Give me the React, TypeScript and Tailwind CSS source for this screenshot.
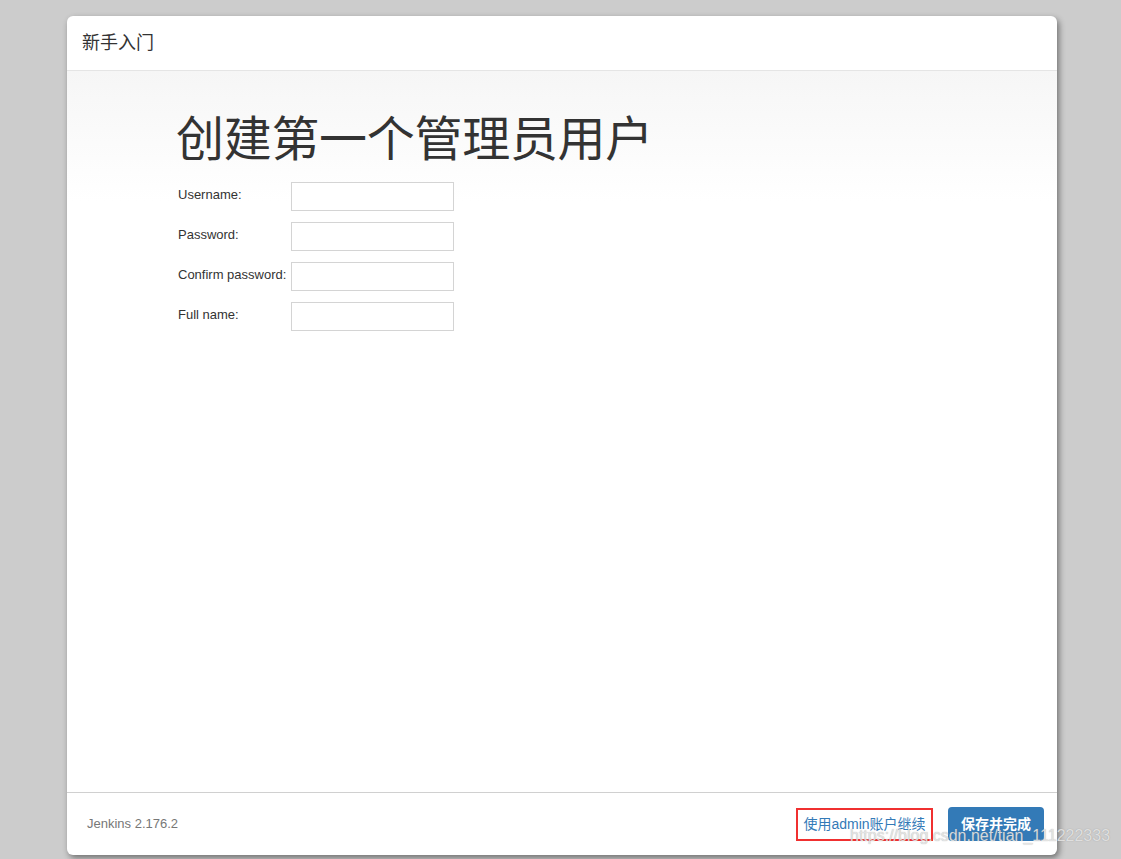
import React from "react";

const sans = "font-['Liberation_Sans','Noto_Sans_CJK_SC',sans-serif]";

export default function App() {
  const fields = ["Username:", "Password:", "Confirm password:", "Full name:"];
  return (
    <div className={`relative h-[859px] w-[1121px] overflow-hidden bg-[#cccccc] pl-[67px] pt-[16px] ${sans}`}>
      <div className="relative flex h-[839px] w-[990px] flex-col rounded-[6px] bg-white shadow-[2px_3px_6px_rgba(0,0,0,0.45)]">
        <div className="flex h-[55px] items-center border-b border-[#e5e5e5] px-[15px]">
          <span className="text-[18px] text-[#333333]">新手入门</span>
        </div>
        <div className="flex-1 bg-[linear-gradient(to_bottom,#f6f6f6_0px,#ffffff_130px)] pl-[109px] pt-[42px]">
          <h1 className="text-[48px] leading-[54px] font-normal text-[#333333] tracking-[-0.3px]">创建第一个管理员用户</h1>
          <div className="mt-[15px] grid grid-cols-[113px_163px] gap-y-[11px] pl-[2px]">
            {fields.map((f) => (
              <React.Fragment key={f}>
                <div className="pt-[5px] text-[13px] leading-[15px] text-[#333333]">{f}</div>
                <input className="h-[29px] w-[163px] border border-[#d4d4d4] bg-white outline-none" />
              </React.Fragment>
            ))}
          </div>
        </div>
        <div className="flex h-[63px] items-center border-t border-[#d0d0d0] pl-[20px] pr-[13px]">
          <span className="text-[13px] text-[#777777]">Jenkins 2.176.2</span>
          <div className="flex-1" />
          <div className="flex h-[33px] w-[137px] items-center justify-center border-2 border-[#f03030] pt-[1px]">
            <span className="text-[14px] text-[#337ab7]">使用admin账户继续</span>
          </div>
          <button className="ml-[15px] flex h-[34px] w-[96px] items-center justify-center rounded-[4px] bg-[#337ab7] text-[14px] font-bold text-white">
            保存并完成
          </button>
        </div>
      </div>
      <div className="pointer-events-none absolute left-[850px] top-[826px] whitespace-nowrap text-[16px] leading-[20px] text-[rgba(236,236,236,0.85)] [text-shadow:0_0_1px_rgba(110,110,110,0.6)]">
        https://blog.csdn.net/tian_111222333
      </div>
    </div>
  );
}
